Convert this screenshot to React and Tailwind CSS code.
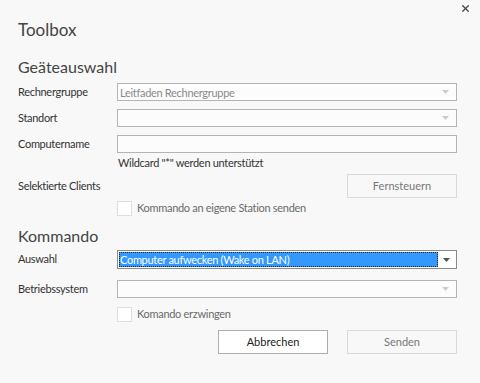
import { X } from "lucide-react"

const font = { fontFamily: "Lato, 'Noto Sans', sans-serif" }

const Arrow = ({ dark }) => (
  <svg width="7" height="4" viewBox="0 0 7 4" className={dark ? "text-[#555]" : "text-[#cdcdcd]"}>
    <path d="M0 0h7L3.5 4z" fill="currentColor" />
  </svg>
)

const Select = ({ value, disabled }) => (
  <div className="flex-1 h-[18px] border border-[#b4b4b4] bg-[#fcfcfc] flex items-center pl-[2px] pr-[7px]">
    <span className={"flex-1 text-[11px] leading-none tracking-[-0.3px] " + (disabled ? "text-[#8a8a8a]" : "text-[#222]")}>{value}</span>
    <Arrow />
  </div>
)

const Label = ({ children }) => (
  <div className="w-[99px] shrink-0 text-[11px] tracking-[-0.3px] text-[#333]">{children}</div>
)

const Check = ({ label }) => (
  <div className="flex items-center h-[15px] pl-[99px]">
    <div className="w-[15px] h-[15px] border border-[#dedede] bg-white" />
    <span className="ml-[5px] text-[11px] tracking-[-0.3px] text-[#6a6a6a]">{label}</span>
  </div>
)

export default function App() {
  return (
    <div className="w-[480px] h-[383px] bg-[#f8f8f8] text-[#333]" style={font}>
      <div className="flex justify-end h-[18px] pt-[3px] pr-[9px]">
        <X className="w-[11px] h-[11px] text-[#444]" strokeWidth={2.8} />
      </div>
      <div className="pl-[18px] pr-[23px]">
        <div className="text-[17px] leading-[24px] text-[#444]">Toolbox</div>

        <div className="mt-[15px] text-[16px] leading-[20px] text-[#444]">Geäteauswahl</div>

        <div className="mt-[6px] flex items-center">
          <Label>Rechnergruppe</Label>
          <Select value="Leitfaden Rechnergruppe" disabled />
        </div>
        <div className="mt-[8px] flex items-center">
          <Label>Standort</Label>
          <Select value="" />
        </div>
        <div className="mt-[8px] flex items-center">
          <Label>Computername</Label>
          <div className="flex-1 h-[18px] border border-[#b4b4b4] bg-[#fcfcfc]" />
        </div>
        <div className="mt-[3px] pl-[100px] text-[11px] leading-[14px] tracking-[-0.3px] text-[#333]">
          Wildcard "*" werden unterstützt
        </div>

        <div className="mt-[4px] flex items-center">
          <Label>Selektierte Clients</Label>
          <div className="flex-1" />
          <button className="w-[110px] h-[24px] border border-[#d8d8d8] bg-[#f8f8f8] text-[11px] text-[#777]">
            Fernsteuern
          </button>
        </div>
        <div className="mt-[3px]">
          <Check label="Kommando an eigene Station senden" />
        </div>

        <div className="mt-[10px] text-[16px] leading-[20px] text-[#444]">Kommando</div>

        <div className="mt-[4px] flex items-center">
          <Label>Auswahl</Label>
          <div className="flex-1 h-[19px] border border-[#8a8a8a] bg-white flex items-stretch p-[1px]">
            <div className="flex-1 bg-[#3399ff] border border-dotted border-[#222] flex items-center">
              <span className="text-[11px] leading-none tracking-[-0.3px] text-white">Computer aufwecken (Wake on LAN)</span>
            </div>
            <div className="w-[17px] flex items-center justify-center">
              <Arrow dark />
            </div>
          </div>
        </div>
        <div className="mt-[11px] flex items-center">
          <Label>Betriebssystem</Label>
          <Select value="" />
        </div>
        <div className="mt-[9px]">
          <Check label="Komando erzwingen" />
        </div>

        <div className="mt-[8px] flex justify-end gap-[19px]">
          <button className="w-[110px] h-[24px] border border-[#adadad] bg-white text-[11px] text-[#222]">
            Abbrechen
          </button>
          <button className="w-[110px] h-[24px] border border-[#d8d8d8] bg-[#f8f8f8] text-[11px] text-[#777]">
            Senden
          </button>
        </div>
      </div>
    </div>
  )
}
